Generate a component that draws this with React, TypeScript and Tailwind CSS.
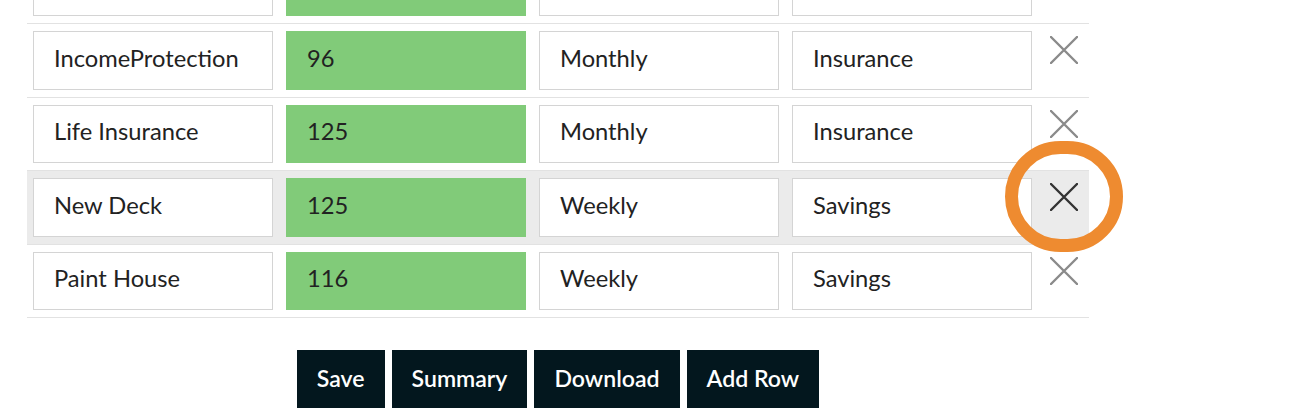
import React from 'react';

type Row = { name: string; amount: string; freq: string; category: string; hover?: boolean };

const rows: Row[] = [
  { name: 'Car Loan', amount: '210', freq: 'Monthly', category: 'Loans' },
  { name: 'IncomeProtection', amount: '96', freq: 'Monthly', category: 'Insurance' },
  { name: 'Life Insurance', amount: '125', freq: 'Monthly', category: 'Insurance' },
  { name: 'New Deck', amount: '125', freq: 'Weekly', category: 'Savings', hover: true },
  { name: 'Paint House', amount: '116', freq: 'Weekly', category: 'Savings' },
];

function Cross({ dark }: { dark?: boolean }) {
  return (
    <svg width="28" height="28" viewBox="0 0 28 28" fill="none">
      <path
        d="M1 1 L27 27 M27 1 L1 27"
        stroke={dark ? '#333333' : '#8a8a8a'}
        strokeWidth="2.4"
        strokeLinecap="round"
      />
    </svg>
  );
}

function Field({ value, green }: { value: string; green?: boolean }) {
  return (
    <div
      className={
        'w-[240px] h-[58.5px] shrink-0 flex items-center pl-[20px] pb-[3px] border text-[23.7px] text-[#222] ' +
        (green ? 'bg-[#81cb79] border-[#81cb79]' : 'bg-white border-[#d4d4d4]')
      }
    >
      {value}
    </div>
  );
}

export default function App() {
  return (
    <div className="w-[1307px] h-[410px] overflow-hidden bg-white font-['Lato','Open_Sans',sans-serif]">
      <div className="ml-[27px] w-[1062px] -mt-[49.5px]">
        {rows.map((r) => (
          <div
            key={r.name}
            className={
              'relative flex items-start pl-[6px] py-[7px] gap-[13px] border-b border-[#e2e2e2] ' +
              (r.hover ? 'bg-[#ebebeb]' : '')
            }
          >
            <Field value={r.name} />
            <Field value={r.amount} green />
            <Field value={r.freq} />
            <Field value={r.category} />
            <div className="w-[44px] flex justify-center pt-[5px] -ml-[3px]">
              <Cross dark={r.hover} />
            </div>
            {r.hover && (
              <div className="absolute left-[978px] top-[-30px] w-[118px] h-[111px] rounded-full border-[13px] border-[#ee8b30]" />
            )}
          </div>
        ))}
        <div className="flex justify-center gap-[7px] mt-[32px]">
          {['Save', 'Summary', 'Download', 'Add Row'].map((b) => (
            <button
              key={b}
              type="button"
              className="h-[58px] px-[20px] pb-[2px] bg-[#03171e] text-white text-[23.1px] font-semibold"
            >
              {b}
            </button>
          ))}
        </div>
      </div>
    </div>
  );
}
